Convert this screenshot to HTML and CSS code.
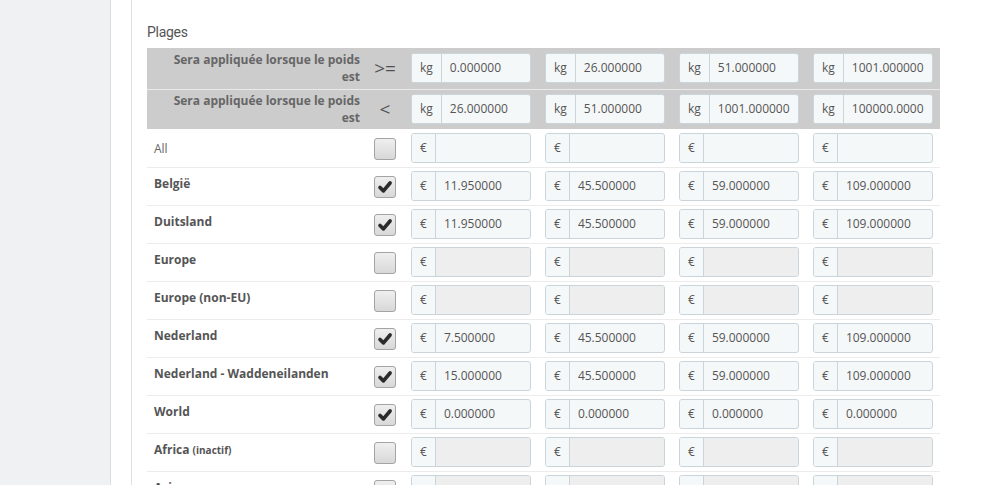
FILE: index.html
```html
<!DOCTYPE html>
<html lang="fr">
<head>
<meta charset="utf-8">
<title>Plages</title>
<link rel="stylesheet" href="styles.css">
</head>
<body>
<div class="layout">
  <aside class="sidebar"></aside>
  <main class="main">
    <section class="panel">
      <h3 class="panel-title">Plages</h3>
      <table class="ranges">
        <colgroup>
          <col class="c-label"><col class="c-sign"><col class="c-val"><col class="c-val"><col class="c-val"><col class="c-val">
        </colgroup>
        <thead>
          <tr class="head">
            <th class="hlabel">Sera appliquée lorsque le poids est</th>
            <th class="sign">&gt;=</th>
            <td><div class="ig"><span class="addon">kg</span><span class="val">0.000000</span></div></td>
            <td><div class="ig"><span class="addon">kg</span><span class="val">26.000000</span></div></td>
            <td><div class="ig"><span class="addon">kg</span><span class="val">51.000000</span></div></td>
            <td><div class="ig"><span class="addon">kg</span><span class="val">1001.000000</span></div></td>
          </tr>
          <tr class="head">
            <th class="hlabel">Sera appliquée lorsque le poids est</th>
            <th class="sign">&lt;</th>
            <td><div class="ig"><span class="addon">kg</span><span class="val">26.000000</span></div></td>
            <td><div class="ig"><span class="addon">kg</span><span class="val">51.000000</span></div></td>
            <td><div class="ig"><span class="addon">kg</span><span class="val">1001.000000</span></div></td>
            <td><div class="ig"><span class="addon">kg</span><span class="val">100000.0000</span></div></td>
          </tr>
        </thead>
        <tbody>
          <tr>
            <td class="label all">All</td>
            <td class="chk"><span class="cb"></span></td>
            <td><div class="ig"><span class="addon">€</span><span class="val"></span></div></td>
            <td><div class="ig"><span class="addon">€</span><span class="val"></span></div></td>
            <td><div class="ig"><span class="addon">€</span><span class="val"></span></div></td>
            <td><div class="ig"><span class="addon">€</span><span class="val"></span></div></td>
          </tr>
          <tr>
            <td class="label">België</td>
            <td class="chk"><span class="cb on"><svg viewBox="0 0 22 22"><path d="M5.5 11.5 L9.3 15.3 L16.6 6.6"/></svg></span></td>
            <td><div class="ig"><span class="addon">€</span><span class="val">11.950000</span></div></td>
            <td><div class="ig"><span class="addon">€</span><span class="val">45.500000</span></div></td>
            <td><div class="ig"><span class="addon">€</span><span class="val">59.000000</span></div></td>
            <td><div class="ig"><span class="addon">€</span><span class="val">109.000000</span></div></td>
          </tr>
          <tr>
            <td class="label">Duitsland</td>
            <td class="chk"><span class="cb on"><svg viewBox="0 0 22 22"><path d="M5.5 11.5 L9.3 15.3 L16.6 6.6"/></svg></span></td>
            <td><div class="ig"><span class="addon">€</span><span class="val">11.950000</span></div></td>
            <td><div class="ig"><span class="addon">€</span><span class="val">45.500000</span></div></td>
            <td><div class="ig"><span class="addon">€</span><span class="val">59.000000</span></div></td>
            <td><div class="ig"><span class="addon">€</span><span class="val">109.000000</span></div></td>
          </tr>
          <tr>
            <td class="label">Europe</td>
            <td class="chk"><span class="cb"></span></td>
            <td><div class="ig off"><span class="addon">€</span><span class="val"></span></div></td>
            <td><div class="ig off"><span class="addon">€</span><span class="val"></span></div></td>
            <td><div class="ig off"><span class="addon">€</span><span class="val"></span></div></td>
            <td><div class="ig off"><span class="addon">€</span><span class="val"></span></div></td>
          </tr>
          <tr>
            <td class="label">Europe (non-EU)</td>
            <td class="chk"><span class="cb"></span></td>
            <td><div class="ig off"><span class="addon">€</span><span class="val"></span></div></td>
            <td><div class="ig off"><span class="addon">€</span><span class="val"></span></div></td>
            <td><div class="ig off"><span class="addon">€</span><span class="val"></span></div></td>
            <td><div class="ig off"><span class="addon">€</span><span class="val"></span></div></td>
          </tr>
          <tr>
            <td class="label">Nederland</td>
            <td class="chk"><span class="cb on"><svg viewBox="0 0 22 22"><path d="M5.5 11.5 L9.3 15.3 L16.6 6.6"/></svg></span></td>
            <td><div class="ig"><span class="addon">€</span><span class="val">7.500000</span></div></td>
            <td><div class="ig"><span class="addon">€</span><span class="val">45.500000</span></div></td>
            <td><div class="ig"><span class="addon">€</span><span class="val">59.000000</span></div></td>
            <td><div class="ig"><span class="addon">€</span><span class="val">109.000000</span></div></td>
          </tr>
          <tr>
            <td class="label">Nederland - Waddeneilanden</td>
            <td class="chk"><span class="cb on"><svg viewBox="0 0 22 22"><path d="M5.5 11.5 L9.3 15.3 L16.6 6.6"/></svg></span></td>
            <td><div class="ig"><span class="addon">€</span><span class="val">15.000000</span></div></td>
            <td><div class="ig"><span class="addon">€</span><span class="val">45.500000</span></div></td>
            <td><div class="ig"><span class="addon">€</span><span class="val">59.000000</span></div></td>
            <td><div class="ig"><span class="addon">€</span><span class="val">109.000000</span></div></td>
          </tr>
          <tr>
            <td class="label">World</td>
            <td class="chk"><span class="cb on"><svg viewBox="0 0 22 22"><path d="M5.5 11.5 L9.3 15.3 L16.6 6.6"/></svg></span></td>
            <td><div class="ig"><span class="addon">€</span><span class="val">0.000000</span></div></td>
            <td><div class="ig"><span class="addon">€</span><span class="val">0.000000</span></div></td>
            <td><div class="ig"><span class="addon">€</span><span class="val">0.000000</span></div></td>
            <td><div class="ig"><span class="addon">€</span><span class="val">0.000000</span></div></td>
          </tr>
          <tr>
            <td class="label">Africa <small>(inactif)</small></td>
            <td class="chk"><span class="cb"></span></td>
            <td><div class="ig off"><span class="addon">€</span><span class="val"></span></div></td>
            <td><div class="ig off"><span class="addon">€</span><span class="val"></span></div></td>
            <td><div class="ig off"><span class="addon">€</span><span class="val"></span></div></td>
            <td><div class="ig off"><span class="addon">€</span><span class="val"></span></div></td>
          </tr>
          <tr>
            <td class="label">Asia</td>
            <td class="chk"><span class="cb"></span></td>
            <td><div class="ig off"><span class="addon">€</span><span class="val"></span></div></td>
            <td><div class="ig off"><span class="addon">€</span><span class="val"></span></div></td>
            <td><div class="ig off"><span class="addon">€</span><span class="val"></span></div></td>
            <td><div class="ig off"><span class="addon">€</span><span class="val"></span></div></td>
          </tr>
        </tbody>
      </table>
    </section>
  </main>
</div>
</body>
</html>
```

FILE: styles.css
```css
html, body {
  margin: 0;
  padding: 0;
  height: 100%;
  overflow: hidden;
  background: #ffffff;
  font-family: "Open Sans", "DejaVu Sans", sans-serif;
  color: #555555;
}

.layout {
  display: flex;
  height: 485px;
}

.sidebar {
  width: 110px;
  flex: none;
  background: #eff1f2;
  border-right: 1px solid #dcdfe1;
}

.main {
  flex: 1;
  padding-left: 20px;
  background: #ffffff;
}

.panel {
  border-left: 1px solid #dfe0e1;
  height: 100%;
  padding: 0 0 0 15px;
}

.panel-title {
  margin: 0;
  padding-top: 23px;
  height: 25px;
  font-family: Roboto, "Open Sans", sans-serif;
  font-weight: 400;
  font-size: 14px;
  line-height: 18px;
  color: #555555;
  letter-spacing: -0.3px;
}

.ranges {
  border-collapse: collapse;
  table-layout: fixed;
  width: 793px;
}

.c-label { width: 219px; }
.c-sign { width: 38px; }
.c-val { width: 134px; }

.ranges td, .ranges th {
  padding: 0;
}

.head {
  background: #cccccc;
  height: 41px;
  border-bottom: 1px solid #eaeaea;
}

.head:last-child {
  border-bottom: none;
  height: 40px;
}

.hlabel {
  text-align: right;
  font-size: 12px;
  font-weight: 700;
  line-height: 17px;
  color: #666666;
  padding: 0 6px 0 20px !important;
  vertical-align: middle;
}

.sign {
  font-size: 19px;
  font-weight: 400;
  color: #505050;
  text-align: center;
  vertical-align: middle;
  padding-bottom: 1px !important;
}

.ranges td {
  padding: 0 7px;
  vertical-align: middle;
}

tbody tr {
  height: 38px;
  border-bottom: 1px solid #ececec;
}

.ranges td.label {
  vertical-align: top;
  padding: 7px 0 0 7px;
  font-size: 12px;
  font-weight: 700;
  line-height: 17px;
  color: #555555;
}

.ranges td.label small {
  font-size: 10px;
  font-weight: 700;
}

.ranges td.label.all {
  vertical-align: middle;
  padding-top: 1px;
  font-weight: 400;
  color: #666666;
}

.ranges td.chk {
  padding: 0;
  text-align: center;
}

.cb {
  display: inline-block;
  box-sizing: border-box;
  width: 22px;
  height: 22px;
  border: 1px solid #a4a4a4;
  border-radius: 3px;
  background: linear-gradient(#efefef, #d8d8d8);
  vertical-align: middle;
}

.cb svg {
  display: block;
  width: 20px;
  height: 20px;
}

.cb svg path {
  fill: none;
  stroke: #2b2b2b;
  stroke-width: 4;
  stroke-linecap: round;
  stroke-linejoin: round;
}

.ig {
  display: flex;
  box-sizing: border-box;
  width: 120px;
  height: 30px;
  border: 1px solid #c9d5da;
  border-radius: 3px;
  background: #f5f8f9;
  overflow: hidden;
  font-size: 12px;
  line-height: 28px;
  color: #555555;
}

.addon {
  flex: none;
  padding: 0 8px;
  border-right: 1px solid #c9d5da;
  background: #f5f8f9;
  color: #555555;
}

.val {
  flex: 1;
  padding: 0 8px;
  white-space: nowrap;
  overflow: hidden;
}

.ig.off .val {
  background: #eeeeee;
}
```
